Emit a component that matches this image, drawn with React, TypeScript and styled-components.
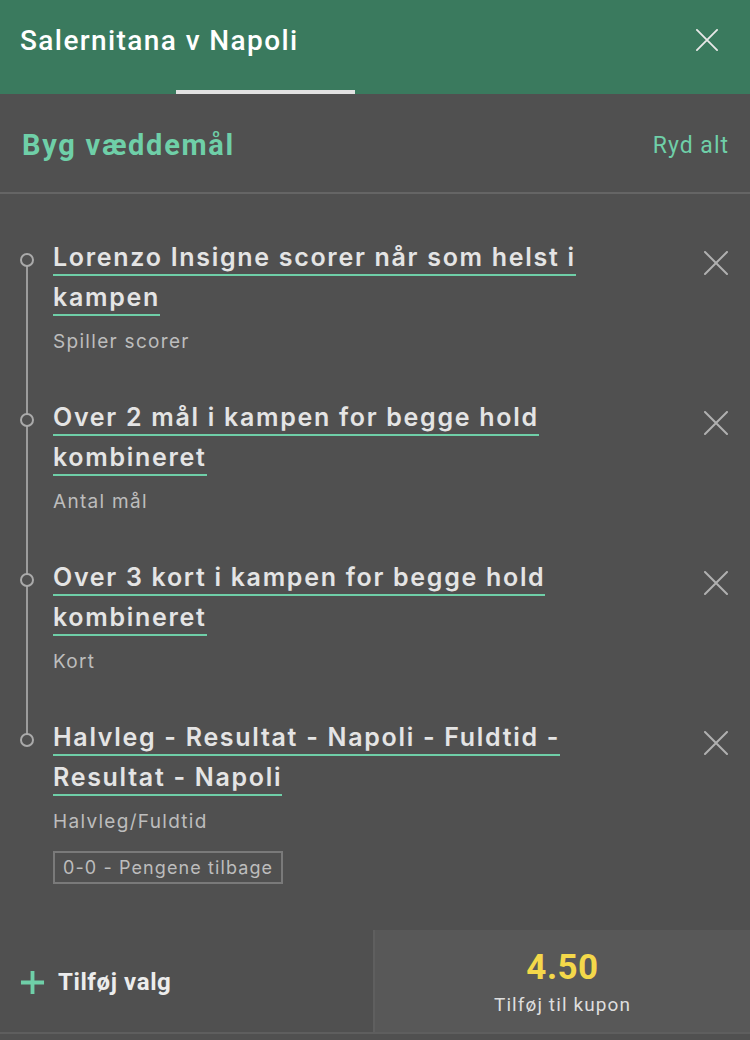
import React from 'react';
import styled, { createGlobalStyle } from 'styled-components';

interface Leg {
  title: string;
  market: string;
  tag?: string;
}

const legs: Leg[] = [
  { title: 'Lorenzo Insigne scorer når som helst i kampen', market: 'Spiller scorer' },
  { title: 'Over 2 mål i kampen for begge hold kombineret', market: 'Antal mål' },
  { title: 'Over 3 kort i kampen for begge hold kombineret', market: 'Kort' },
  {
    title: 'Halvleg - Resultat - Napoli - Fuldtid - Resultat - Napoli',
    market: 'Halvleg/Fuldtid',
    tag: '0-0 - Pengene tilbage',
  },
];

const GlobalStyle = createGlobalStyle`
  html, body {
    margin: 0;
    padding: 0;
    background: #505050;
  }
  * { box-sizing: border-box; }
`;

const Page = styled.div`
  width: 750px;
  height: 1040px;
  background: #505050;
  display: flex;
  flex-direction: column;
  font-family: Roboto, "Liberation Sans", sans-serif;
  overflow: hidden;
`;

const Header = styled.header`
  height: 94px;
  background: #3a7a5e;
  display: flex;
  flex-direction: column;
`;

const HeaderRow = styled.div`
  flex: 1;
  display: flex;
  align-items: center;
  justify-content: space-between;
  padding: 0 32px 10px 20px;
`;

const HeaderTitle = styled.h1`
  margin: 0;
  color: #ffffff;
  font-size: 28px;
  font-weight: 500;
  letter-spacing: 1.4px;
`;

const TabIndicator = styled.div`
  margin-left: 176px;
  width: 179px;
  height: 4px;
  background: #e2e2e2;
`;

const SectionHead = styled.div`
  height: 100px;
  display: flex;
  align-items: center;
  justify-content: space-between;
  padding: 4px 21px 0 22px;
  border-bottom: 2px solid #656565;
`;

const SectionTitle = styled.h2`
  margin: 0;
  color: #6fcfa8;
  font-size: 29px;
  font-weight: 700;
  letter-spacing: 1.7px;
`;

const ClearAll = styled.span`
  color: #6fcfa8;
  font-size: 23px;
  letter-spacing: 1px;
`;

const LegList = styled.div`
  flex: 1;
  position: relative;
  padding-top: 43px;
`;

const Rail = styled.div`
  position: absolute;
  left: 26px;
  top: 66px;
  width: 2px;
  height: 480px;
  background: #9c9c9c;
`;

const LegRow = styled.div`
  position: relative;
  display: flex;
  align-items: flex-start;
  padding: 0 20px 0 53px;
  min-height: 160px;
`;

const Dot = styled.span`
  position: absolute;
  left: 20px;
  top: 16px;
  width: 14px;
  height: 14px;
  border: 2px solid #aaaaaa;
  border-radius: 50%;
  background: #505050;
`;

const LegBody = styled.div`
  flex: 1;
  max-width: 560px;
`;

const LegTitle = styled.div`
  font-family: Inter, "Open Sans", sans-serif;
  font-size: 25px;
  font-weight: 600;
  line-height: 40px;
  color: #e4e4e4;
  letter-spacing: 1.7px;
  span {
    padding-bottom: 4px;
    background-image: linear-gradient(#6fcfa8, #6fcfa8);
    background-repeat: no-repeat;
    background-size: 100% 2px;
    background-position: 0 100%;
    box-decoration-break: clone;
    -webkit-box-decoration-break: clone;
  }
`;

const LegMarket = styled.div`
  margin-top: 13px;
  font-family: Inter, "Open Sans", sans-serif;
  font-size: 19px;
  color: #bdbdbd;
  letter-spacing: 1.3px;
`;

const Tag = styled.span`
  display: inline-block;
  margin-top: 18px;
  padding: 4px 8px;
  border: 2px solid #7a7a7a;
  font-family: Inter, "Open Sans", sans-serif;
  font-size: 18px;
  color: #bdbdbd;
  letter-spacing: 1.1px;
`;

const RemoveBtn = styled.button`
  border: 0;
  background: none;
  padding: 0;
  margin: 12px 0 0 auto;
  width: 28px;
  height: 28px;
  display: flex;
  align-items: center;
  justify-content: center;
`;

const Footer = styled.footer`
  height: 104px;
  display: flex;
  border-bottom: 2px solid #5e5e5e;
  margin-bottom: 6px;
`;

const AddPick = styled.div`
  width: 373px;
  display: flex;
  align-items: center;
  gap: 13px;
  padding: 2px 0 0 20px;
  color: #ececec;
  font-size: 24px;
  font-weight: 700;
  letter-spacing: 0.6px;
`;

const Coupon = styled.div`
  flex: 1;
  background: #585858;
  border-left: 2px solid #5f5f5f;
  display: flex;
  flex-direction: column;
  align-items: center;
  justify-content: center;
  gap: 5px;
`;

const Odds = styled.div`
  color: #f4d84a;
  font-size: 35px;
  font-weight: 700;
  letter-spacing: 0.5px;
`;

const CouponLabel = styled.div`
  color: #dedede;
  font-size: 19px;
  letter-spacing: 1.1px;
`;

const Cross: React.FC<{ size: number; color: string }> = ({ size, color }) => (
  <svg width={size} height={size} viewBox="0 0 24 24" fill="none">
    <path d="M1 1L23 23M23 1L1 23" stroke={color} strokeWidth="2" strokeLinecap="round" />
  </svg>
);

const App: React.FC = () => {
  return (
    <Page>
      <GlobalStyle />
      <Header>
        <HeaderRow>
          <HeaderTitle>Salernitana v Napoli</HeaderTitle>
          <Cross size={22} color="#e8e8e8" />
        </HeaderRow>
        <TabIndicator />
      </Header>
      <SectionHead>
        <SectionTitle>Byg væddemål</SectionTitle>
        <ClearAll>Ryd alt</ClearAll>
      </SectionHead>
      <LegList>
        <Rail />
        {legs.map(leg => (
          <LegRow key={leg.title}>
            <Dot />
            <LegBody>
              <LegTitle>
                <span>{leg.title}</span>
              </LegTitle>
              <LegMarket>{leg.market}</LegMarket>
              {leg.tag && <Tag>{leg.tag}</Tag>}
            </LegBody>
            <RemoveBtn>
              <Cross size={24} color="#b0b0b0" />
            </RemoveBtn>
          </LegRow>
        ))}
      </LegList>
      <Footer>
        <AddPick>
          <svg width="25" height="25" viewBox="0 0 26 26">
            <path d="M13 1V25M1 13H25" stroke="#6fcfa8" strokeWidth="4" />
          </svg>
          Tilføj valg
        </AddPick>
        <Coupon>
          <Odds>4.50</Odds>
          <CouponLabel>Tilføj til kupon</CouponLabel>
        </Coupon>
      </Footer>
    </Page>
  );
};

export default App;
